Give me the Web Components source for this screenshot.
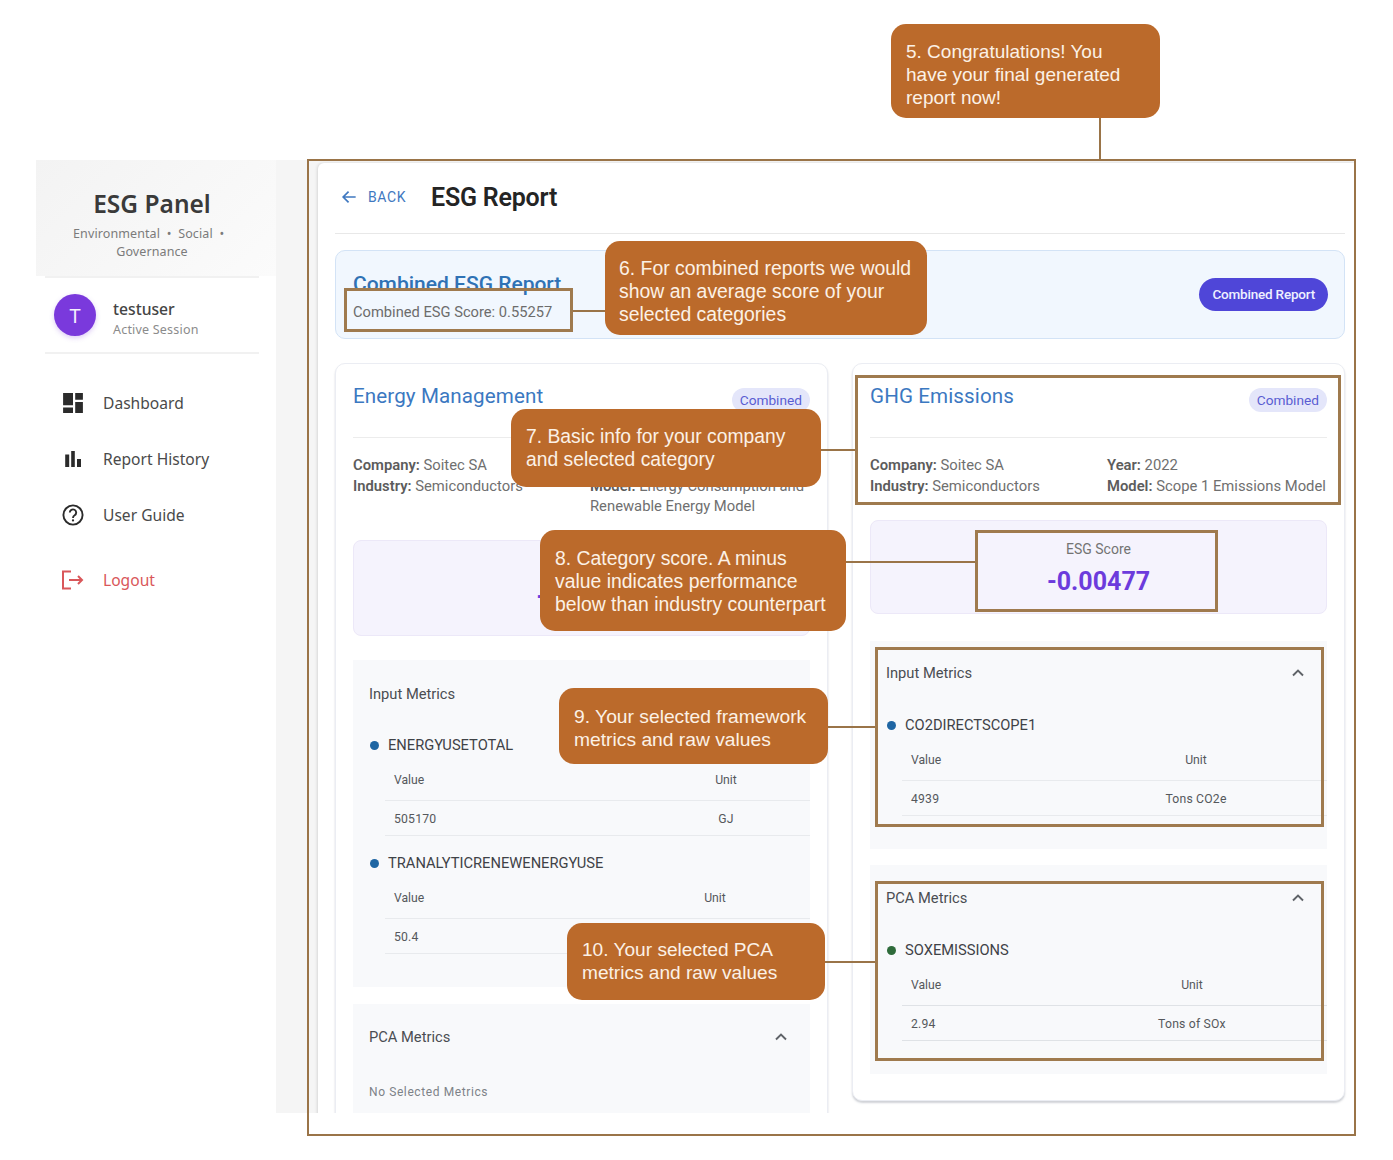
<!DOCTYPE html>
<html>
<head>
<meta charset="utf-8">
<title>ESG Report</title>
<style>
    html, body { margin: 0; background: #fff; }
    body { font-family: Roboto, "Liberation Sans", sans-serif; }
</style>
</head>
<body>

<guide-stage>
    <esg-sidebar slot="side">
        <nav-item icon="dashboard" style="--mt:21px">Dashboard</nav-item>
        <nav-item icon="bars">Report History</nav-item>
        <nav-item icon="help">User Guide</nav-item>
        <nav-item icon="logout" danger style="--mt:9px">Logout</nav-item>
    </esg-sidebar>

    <report-page slot="main">
        <report-banner></report-banner>
        <div class="cols" style="display:grid;grid-template-columns:493px 493px;gap:24px;align-items:start;margin-top:24px;">
            <category-card name="Energy Management" company="Soitec SA" industry="Semiconductors"
                model="Energy Consumption and Renewable Energy Model" score="-" info-h="85"
                style="--score-h:96px;--score-top:33px;--score-gap:24px;--score-shift:80px">
                <metric-accordion title="Input Metrics" style="--pad:21px 0 33px">
                    <metric-item name="ENERGYUSETOTAL" value="505170" unit="GJ" unit-w="168px"></metric-item>
                    <metric-item name="TRANALYTICRENEWENERGYUSE" value="50.4" unit-w="190px"></metric-item>
                </metric-accordion>
                <metric-accordion title="PCA Metrics" chevron style="--pad:20px 0 30px;--mt:17px">
                    <div style="font-size:12px;letter-spacing:.6px;color:#7d8288;padding:24px 16px 0;">No Selected Metrics</div>
                </metric-accordion>
            </category-card>
            <category-card name="GHG Emissions" company="Soitec SA" industry="Semiconductors" year="2022"
                model="Scope 1 Emissions Model" label="ESG Score" score="-0.00477" info-h="65">
                <metric-accordion title="Input Metrics" chevron style="--pad:19px 0 33px;--gap:12px">
                    <metric-item name="CO2DIRECTSCOPE1" value="4939" unit="Tons CO2e" unit-w="262px"></metric-item>
                </metric-accordion>
                <metric-accordion title="PCA Metrics" chevron style="--pad:20px 0 33px;--mt:16px;--gap:12px;--line:#dfe2e6">
                    <metric-item name="SOXEMISSIONS" value="2.94" unit="Tons of SOx" unit-w="270px" dot="#2e6b3a"></metric-item>
                </metric-accordion>
            </category-card>
        </div>
    </report-page>

    <!-- annotation layer: free canvas on top of the screenshot -->
    <mark-box slot="notes" x="307" y="159" w="1049" h="977" thin></mark-box>
    <mark-box slot="notes" x="344" y="288" w="229" h="44"></mark-box>
    <mark-box slot="notes" x="855" y="375" w="486" h="130"></mark-box>
    <mark-box slot="notes" x="975" y="530" w="243" h="82"></mark-box>
    <mark-box slot="notes" x="875" y="647" w="449" h="180"></mark-box>
    <mark-box slot="notes" x="875" y="881" w="449" h="180"></mark-box>

    <mark-box slot="notes" x="1099" y="118" w="2" h="42" line></mark-box>
    <mark-box slot="notes" x="573" y="310" w="32" h="2" line></mark-box>
    <mark-box slot="notes" x="821" y="449" w="34" h="2" line></mark-box>
    <mark-box slot="notes" x="846" y="561" w="129" h="2" line></mark-box>
    <mark-box slot="notes" x="828" y="726" w="47" h="2" line></mark-box>
    <mark-box slot="notes" x="825" y="961" w="50" h="2" line></mark-box>

    <call-out slot="notes" x="891" y="24" w="269" h="94" dy="6" fs="19">5. Congratulations! You<br>have your final generated<br>report now!</call-out>
    <call-out slot="notes" x="605" y="241" w="322" h="94" dy="6" pad="14" fs="19.4">6. For combined reports we would<br>show an average score of your<br>selected categories</call-out>
    <call-out slot="notes" x="511" y="409" w="310" h="78" fs="19.3">7. Basic info for your company<br>and selected category</call-out>
    <call-out slot="notes" x="540" y="530" w="306" h="101" dy="1" fs="19.4">8. Category score. A minus<br>value indicates performance<br>below than industry counterpart</call-out>
    <call-out slot="notes" x="559" y="688" w="269" h="76" dy="4" fs="19.25">9. Your selected framework<br>metrics and raw values</call-out>
    <call-out slot="notes" x="567" y="923" w="258" h="77" dy="-2" fs="19.1">10. Your selected PCA<br>metrics and raw values</call-out>
</guide-stage>

<script>
const icons =
{
    dashboard: `<path fill="#2b2b2b" d="M3 3h9v11H3zM14 3h7v6h-7zM14 11h7v10h-7zM3 16h9v5H3z" transform="translate(12 12) scale(1.1) translate(-12 -12)"/>`,
    bars: `<path fill="#2b2b2b" d="M4.2 7.5h4V20h-4zM10.2 4h3.6v16h-3.6zM16 12h4v8h-4z"/>`,
    help: `<circle cx="12" cy="12" r="9.6" fill="none" stroke="#2b2b2b" stroke-width="1.9"/><path fill="none" stroke="#2b2b2b" stroke-width="1.9" d="M8.8 9.6a3.2 3.2 0 1 1 4.9 2.7c-1.1.7-1.7 1.3-1.7 2.6"/><circle cx="12" cy="17.4" r="1.15" fill="#2b2b2b"/>`,
    logout: `<path fill="none" stroke="#d9575a" stroke-width="2" d="M10 3.5H2v17h8M8 12h13M17 8l4 4-4 4"/>`
};

class GuideStage extends HTMLElement
{
    constructor()
    {
        super();
        this.attachShadow({mode: 'open'}).innerHTML = `
            <style>
                :host { display: block; position: relative; width: 1393px; height: 1160px; overflow: hidden; background: #fff; }
                .app
                {
                    display: flex;
                    width: 1319px;
                    margin: 160px 0 0 36px;
                    height: 953px;
                    overflow: hidden;
                    background: #f5f5f5;
                }
            </style>
            <div class="app">
                <slot name="side"></slot>
                <slot name="main"></slot>
            </div>
            <slot name="notes"></slot>
        `;
    }
}

class EsgSidebar extends HTMLElement
{
    constructor()
    {
        super();
        this.attachShadow({mode: 'open'}).innerHTML = `
            <style>
                :host
                {
                    display: block;
                    flex: none;
                    width: 240px;
                    background: #fff;
                    font-family: "Noto Sans", sans-serif;
                    color: #3d3d3d;
                }
                .brand
                {
                    box-sizing: border-box;
                    height: 116px;
                    padding: 28px 24px 0 16px;
                    text-align: center;
                    background: linear-gradient(135deg, #f3f3f3, #fbfbfb);
                }
                .brand b { display: block; font-size: 24.5px; line-height: 34px; font-weight: 600; color: #3a3a3a; margin-top: -1px; }
                .brand span { display: block; margin-top: 4px; font-size: 12.5px; line-height: 18px; color: #7b7b7b; letter-spacing: .1px; }
                .user
                {
                    display: flex;
                    align-items: center;
                    gap: 17px;
                    margin: 0 17px 0 9px;
                    padding: 0 0 0 9px;
                    height: 74px;
                    border-top: 2px solid #f1f1f1;
                    border-bottom: 2px solid #f1f1f1;
                }
                .avatar
                {
                    flex: none;
                    width: 42px;
                    height: 42px;
                    border-radius: 50%;
                    background: #7a39dc;
                    color: #f4eefc;
                    font-size: 20px;
                    display: flex;
                    align-items: center;
                    justify-content: center;
                    box-shadow: 0 2px 5px rgba(122,57,220,.25);
                }
                .who { padding-top: 8px; }
                .name { font-size: 15.7px; line-height: 21px; font-weight: 500; color: #444; }
                .state { font-size: 12.5px; line-height: 20px; color: #8b8b8b; letter-spacing: .2px; }
            </style>
            <div class="brand">
                <b>ESG Panel</b>
                <span>Environmental &nbsp;•&nbsp; Social &nbsp;•&nbsp;&nbsp; Governance</span>
            </div>
            <div class="user">
                <div class="avatar">T</div>
                <div class="who">
                    <div class="name">testuser</div>
                    <div class="state">Active Session</div>
                </div>
            </div>
            <slot></slot>
        `;
    }
}

class NavItem extends HTMLElement
{
    constructor()
    {
        super();
        const red = this.hasAttribute("danger");
        this.attachShadow({mode: 'open'}).innerHTML = `
            <style>
                :host
                {
                    display: flex;
                    align-items: center;
                    height: 56px;
                    margin-top: var(--mt, 0);
                    padding-left: 25px;
                    font-size: 15.6px;
                    color: ${red ? "#d9575a" : "#4a4a4a"};
                }
                svg { width: 24px; height: 24px; margin-right: 18px; }
            </style>
            <svg viewBox="0 0 24 24">${icons[this.getAttribute("icon")]}</svg>
            <slot></slot>
        `;
    }
}

class ReportPage extends HTMLElement
{
    constructor()
    {
        super();
        this.attachShadow({mode: 'open'}).innerHTML = `
            <style>
                :host { display: block; flex: 1; min-width: 0; padding-left: 42px; }
                .paper
                {
                    box-sizing: border-box;
                    height: 1000px;
                    margin-top: 3px;
                    padding: 0 10px 0 17px;
                    background: #fff;
                    border-radius: 6px 0 0 0;
                    box-shadow: -1px 0 3px rgba(0,0,0,.12);
                }
                header
                {
                    display: flex;
                    align-items: center;
                    height: 68px;
                    padding: 0 0 2px 1px;
                    border-bottom: 1px solid #e8e8e8;
                    margin-bottom: 16px;
                }
                .back { display: flex; align-items: center; color: #3f78c0; font-size: 14px; letter-spacing: .6px; width: 95px; }
                .back svg { width: 20px; height: 20px; margin: 0 9px 0 3px; }
                h1 { margin: 0; font-size: 25px; font-weight: 600; color: #242424; letter-spacing: -.2px; }
            </style>
            <div class="paper">
                <header>
                    <div class="back">
                        <svg viewBox="0 0 24 24"><path fill="none" stroke="#3f78c0" stroke-width="2" d="M20 12H5M11.5 5.5 5 12l6.5 6.5"/></svg>
                        BACK
                    </div>
                    <h1>ESG Report</h1>
                </header>
                <slot></slot>
            </div>
        `;
    }
}

class ReportBanner extends HTMLElement
{
    constructor()
    {
        super();
        this.attachShadow({mode: 'open'}).innerHTML = `
            <style>
                :host
                {
                    display: flex;
                    box-sizing: border-box;
                    width: 1010px;
                    height: 89px;
                    padding: 0 16px 0 17px;
                    align-items: center;
                    justify-content: space-between;
                    background: #f1f7fe;
                    border: 1px solid #d3e3f6;
                    border-radius: 10px;
                }
                .left { padding-top: 2px; }
                h2 { margin: 0; font-size: 21px; line-height: 28px; font-weight: 500; color: #2f72b5; }
                p { margin: 4px 0 0; font-size: 14.7px; line-height: 20px; color: #6c6c6c; }
                .pill
                {
                    padding: 0 13px;
                    height: 33px;
                    line-height: 33px;
                    border-radius: 17px;
                    background: #4f46d8;
                    color: #eef0ff;
                    font-size: 13.5px;
                    font-weight: 500;
                    letter-spacing: -.2px;
                }
            </style>
            <div class="left">
                <h2>Combined ESG Report</h2>
                <p>Combined ESG Score: 0.55257</p>
            </div>
            <div class="pill">Combined Report</div>
        `;
    }
}

class CategoryCard extends HTMLElement
{
    constructor()
    {
        super();
        const a = n => this.getAttribute(n);
        this.attachShadow({mode: 'open'}).innerHTML = `
            <style>
                :host
                {
                    display: block;
                    box-sizing: border-box;
                    padding: 0 17px 26px;
                    background: #fff;
                    border: 1px solid #ebedf3;
                    border-radius: 10px;
                    box-shadow: 0 2px 2px rgba(120,125,140,.35);
                }
                .head
                {
                    display: flex;
                    justify-content: space-between;
                    height: 74px;
                    box-sizing: border-box;
                    padding-top: 18px;
                    border-bottom: 1px solid #ececec;
                }
                .title { font-size: 20.6px; line-height: 28px; color: #3b78c1; letter-spacing: .1px; }
                .chip
                {
                    height: 24px;
                    line-height: 25px;
                    margin-top: 6px;
                    padding: 0 8px;
                    border-radius: 12px;
                    background: #e4e6fa;
                    color: #5a5dd2;
                    font-size: 13.7px;
                }
                .info
                {
                    display: grid;
                    grid-template-columns: 237px 1fr;
                    height: ${a("info-h")}px;
                    padding-top: 17px;
                    font-size: 14.8px;
                    line-height: 20.5px;
                    color: #6f6f6f;
                }
                .info b { color: #5c5c5c; font-weight: 600; }
                .score
                {
                    height: var(--score-h, 94px);
                    box-sizing: border-box;
                    padding-top: var(--score-top, 18px);
                    text-align: center;
                    background: #f5f3fd;
                    border: 1px solid #ece8f8;
                    border-radius: 8px;
                    margin-bottom: var(--score-gap, 27px);
                }
                .score small { display: block; font-size: 14px; line-height: 20px; color: #737373; }
                .score strong
                {
                    display: block;
                    margin-top: 7px;
                    padding-right: var(--score-shift, 0);
                    font-size: 25px;
                    line-height: 32px;
                    font-weight: 700;
                    color: #6c3bdc;
                }
            </style>
            <div class="head">
                <div class="title">${a("name")}</div>
                <div class="chip">Combined</div>
            </div>
            <div class="info">
                <div><b>Company:</b> ${a("company")}<br><b>Industry:</b> ${a("industry")}</div>
                <div>${a("year") ? `<b>Year:</b> ${a("year")}` : ""}<br><b>Model:</b> ${a("model")}</div>
            </div>
            <div class="score">
                ${a("label") ? `<small>${a("label")}</small>` : ""}
                <strong>${a("score")}</strong>
            </div>
            <slot></slot>
        `;
    }
}

class MetricAccordion extends HTMLElement
{
    constructor()
    {
        super();
        this.attachShadow({mode: 'open'}).innerHTML = `
            <style>
                :host
                {
                    display: block;
                    padding: var(--pad, 20px 0);
                    margin-top: var(--mt, 0);
                    background: #f8f9fb;
                }
                .top
                {
                    display: flex;
                    align-items: center;
                    justify-content: space-between;
                    height: 26px;
                    padding: 0 16px;
                    font-size: 14.7px;
                    color: #4a4d52;
                    margin-bottom: var(--gap, 11px);
                }
                svg { width: 20px; height: 20px; margin-right: 3px; }
            </style>
            <div class="top">
                <span>${this.getAttribute("title")}</span>
                ${this.hasAttribute("chevron") ? `<svg viewBox="0 0 24 24"><path fill="none" stroke="#5f6368" stroke-width="2.3" d="M6 15l6-6 6 6"/></svg>` : ""}
            </div>
            <slot></slot>
        `;
    }
}

class MetricItem extends HTMLElement
{
    constructor()
    {
        super();
        const a = n => this.getAttribute(n);
        this.attachShadow({mode: 'open'}).innerHTML = `
            <style>
                :host { display: block; padding-top: 15px; }
                .name
                {
                    display: flex;
                    align-items: center;
                    height: 24px;
                    padding-left: 17px;
                    font-size: 14.7px;
                    color: #3f4247;
                }
                i
                {
                    width: 9px;
                    height: 9px;
                    border-radius: 50%;
                    background: ${a("dot") || "#1f66a3"};
                    margin-right: 9px;
                }
                .row
                {
                    display: grid;
                    grid-template-columns: 1fr ${a("unit-w")};
                    margin-left: 32px;
                    font-size: 12.2px;
                    color: #55585c;
                    border-bottom: 1px solid var(--line, #e8eaed);
                    align-items: center;
                }
                .row > div:first-child { padding-left: 9px; }
                .row > div:last-child { text-align: center; }
                .h { height: 41px; padding-top: 2px; }
                .v { height: 33px; padding-top: 1px; letter-spacing: .2px; }
            </style>
            <div class="name"><i></i>${a("name")}</div>
            <div class="row h"><div>Value</div><div>Unit</div></div>
            <div class="row v"><div>${a("value")}</div><div>${a("unit") || ""}</div></div>
        `;
    }
}

// free canvas items, placed by attribute
class MarkBox extends HTMLElement
{
    constructor()
    {
        super();
        const a = n => this.getAttribute(n);
        const border = this.hasAttribute("line") ? "background:#9a7448;"
            : this.hasAttribute("thin") ? "border:2px solid #9a7448;" : "border:3px solid #9f7a4e;";
        this.attachShadow({mode: 'open'}).innerHTML = `
            <style>
                :host
                {
                    position: absolute;
                    box-sizing: border-box;
                    left: ${a("x")}px;
                    top: ${a("y")}px;
                    width: ${a("w")}px;
                    height: ${a("h")}px;
                    ${border}
                }
            </style>
        `;
    }
}

class CallOut extends HTMLElement
{
    constructor()
    {
        super();
        const a = n => this.getAttribute(n);
        const dy = Number(a("dy") || 0);
        this.attachShadow({mode: 'open'}).innerHTML = `
            <style>
                :host
                {
                    position: absolute;
                    box-sizing: border-box;
                    display: flex;
                    align-items: center;
                    left: ${a("x")}px;
                    top: ${a("y")}px;
                    width: ${a("w")}px;
                    height: ${a("h")}px;
                    padding: ${Math.max(dy, 0)}px 0 ${Math.max(-dy, 0)}px ${a("pad") || 15}px;
                    background: #bb6a2b;
                    border-radius: 15px;
                    color: #fbf1e6;
                    font-family: "Liberation Sans", Arial, sans-serif;
                    font-size: ${a("fs") || 19}px;
                    line-height: 23px;
                    white-space: nowrap;
                }
            </style>
            <div><slot></slot></div>
        `;
    }
}

customElements.define("guide-stage", GuideStage);
customElements.define("esg-sidebar", EsgSidebar);
customElements.define("nav-item", NavItem);
customElements.define("report-page", ReportPage);
customElements.define("report-banner", ReportBanner);
customElements.define("category-card", CategoryCard);
customElements.define("metric-accordion", MetricAccordion);
customElements.define("metric-item", MetricItem);
customElements.define("mark-box", MarkBox);
customElements.define("call-out", CallOut);
</script>
</body>
</html>
